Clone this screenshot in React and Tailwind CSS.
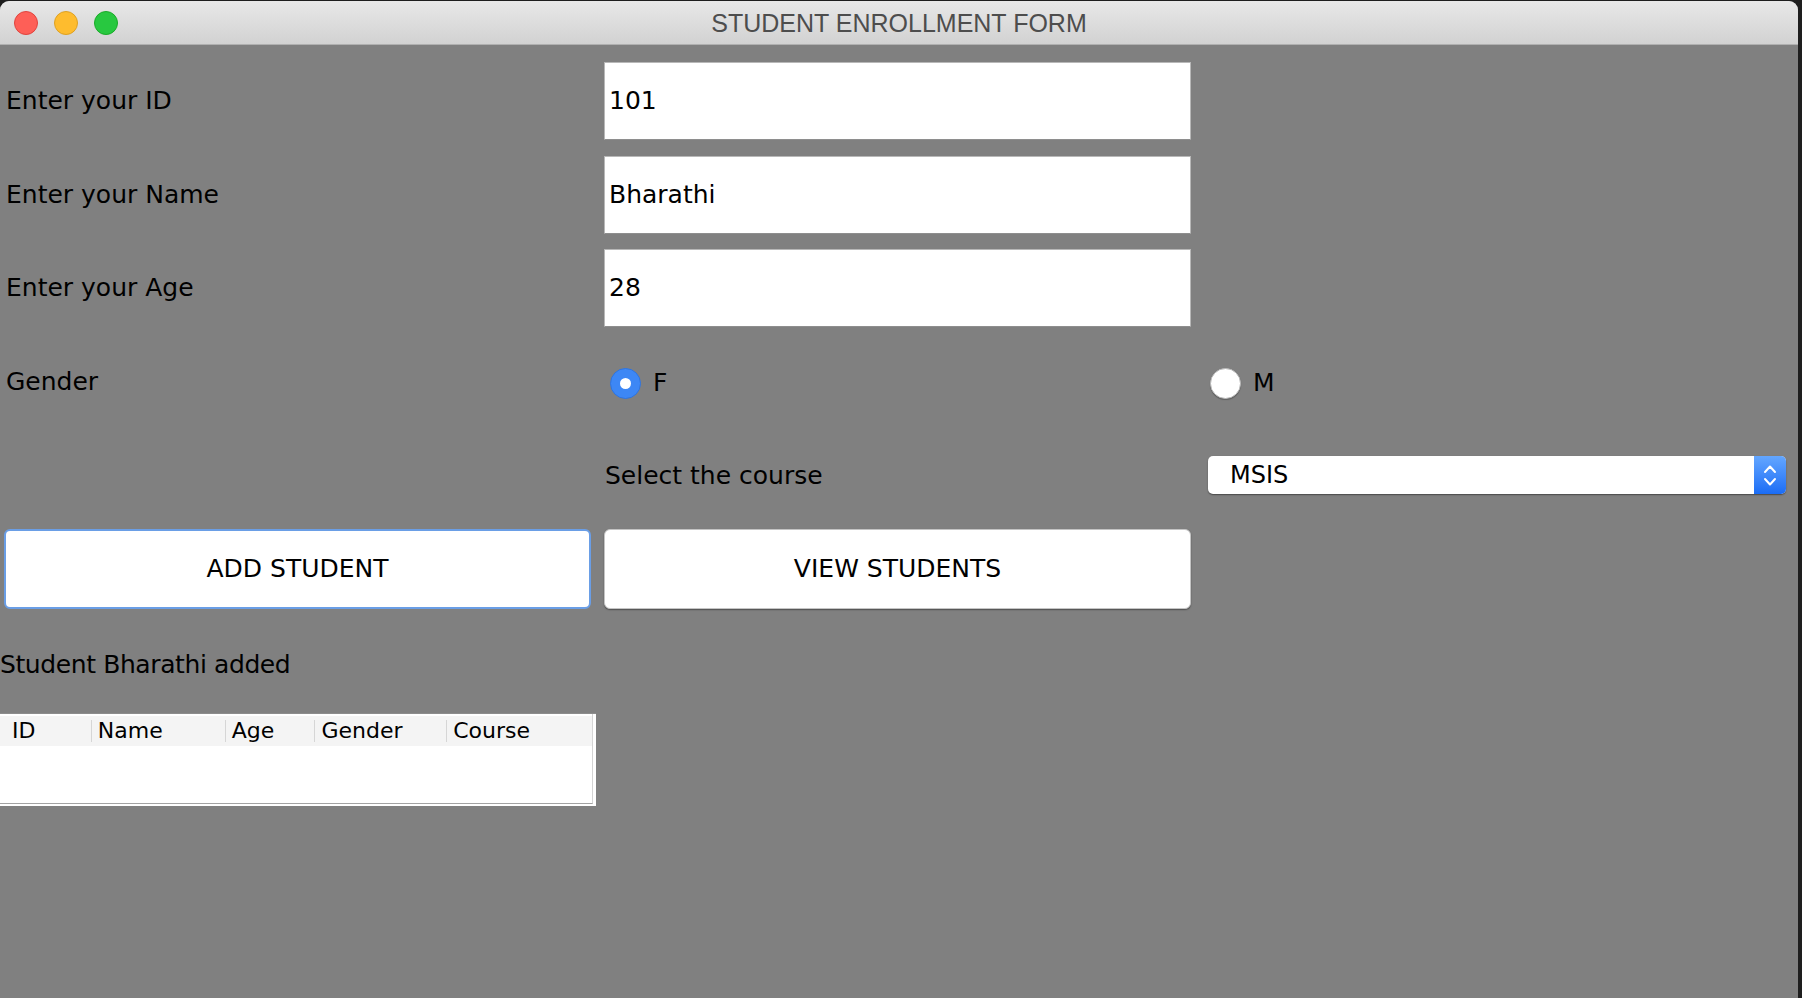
import React from "react";

const font = { fontFamily: '"DejaVu Sans", sans-serif' };

function Field({ value }) {
  return (
    <div className="my-[1px] flex items-center bg-white border border-[#b8b8b8] border-b-[#8e8e8e] pl-[4px] text-[25px] text-black">
      {value}
    </div>
  );
}

function Label({ children, className = "" }) {
  return (
    <div className={`flex items-center text-[25px] text-black ${className}`}>
      {children}
    </div>
  );
}

function Radio({ checked, label }) {
  return (
    <div className="flex items-center gap-[12px] pl-[6px] pt-[3px] text-[25px] text-black">
      {checked ? (
        <div className="w-[31px] h-[31px] rounded-full bg-[#3d87f5] border border-[#2f74de] flex items-center justify-center">
          <div className="w-[11px] h-[11px] rounded-full bg-white" />
        </div>
      ) : (
        <div className="w-[31px] h-[31px] rounded-full bg-white border border-[#b9b9b9] shadow-[0_1px_1px_rgba(0,0,0,0.25)]" />
      )}
      <span>{label}</span>
    </div>
  );
}

function Combo() {
  return (
    <div className="flex items-center pl-[4px] pr-[5px]">
      <div className="flex-1 h-[38px] flex bg-white rounded-[5px] shadow-[0_1px_1.5px_rgba(0,0,0,0.45)] overflow-hidden">
        <div className="flex-1 flex items-center pl-[22px] text-[24px] text-black">MSIS</div>
        <div className="w-[32px] h-full bg-gradient-to-b from-[#63a6ff] to-[#1a6cf5] flex flex-col items-center justify-center gap-[3px]">
          <svg width="14" height="10" viewBox="0 0 14 10">
            <path d="M2 8 L7 2.5 L12 8" fill="none" stroke="white" strokeWidth="2" strokeLinecap="round" strokeLinejoin="round" />
          </svg>
          <svg width="14" height="10" viewBox="0 0 14 10">
            <path d="M2 2 L7 7.5 L12 2" fill="none" stroke="white" strokeWidth="2" strokeLinecap="round" strokeLinejoin="round" />
          </svg>
        </div>
      </div>
    </div>
  );
}

function StudentTable() {
  const cols = [
    { name: "ID", w: "w-[91px]", pl: "pl-[12px]" },
    { name: "Name", w: "w-[134px]", pl: "pl-[7px]" },
    { name: "Age", w: "w-[90px]", pl: "pl-[7px]" },
    { name: "Gender", w: "w-[132px]", pl: "pl-[7px]" },
    { name: "Course", w: "w-[146px]", pl: "pl-[7px]" },
  ];
  return (
    <div className="-ml-[4px] -mt-[3px] w-[596px] h-[93px] bg-white border-t border-[#8c8c8c] pr-[3px] pb-[2px]">
      <div className="h-full flex flex-col border-r border-b border-[#a3a3a3] border-r-[#d4d4d4]">
        <div className="mt-[2px] h-[30px] bg-[#f4f4f4] flex">
          {cols.map((c, i) => (
            <div key={c.name} className={`${c.w} h-full flex items-center relative ${c.pl} text-[22px] text-black`}>
              {i > 0 && <div className="absolute left-0 top-[4px] bottom-[4px] w-[1px] bg-[#d6d6d6]" />}
              {c.name}
            </div>
          ))}
          <div className="flex-1 relative">
            <div className="absolute left-0 top-[4px] bottom-[4px] w-[1px] bg-[#d6d6d6]" />
          </div>
        </div>
        <div className="flex-1" />
      </div>
    </div>
  );
}

export default function App() {
  return (
    <div className="w-[1802px] h-[998px] bg-[#1e1e1e] pt-[1px] overflow-hidden" style={font}>
      <div className="w-[1798px] h-[997px] rounded-t-[9px] overflow-hidden bg-[#808080] flex flex-col">
        {/* Title bar */}
        <div className="h-[44px] shrink-0 bg-gradient-to-b from-[#e8e8e8] to-[#d2d2d2] border-b border-[#b0b0b0] flex items-center relative">
          <div className="flex items-center gap-[16px] pl-[14px]">
            <div className="w-[24px] h-[24px] rounded-full bg-[#fe5f57] border border-[#e0443e]" />
            <div className="w-[24px] h-[24px] rounded-full bg-[#febc2e] border border-[#dea123]" />
            <div className="w-[24px] h-[24px] rounded-full bg-[#28c840] border border-[#1aab29]" />
          </div>
          <div
            className="absolute inset-0 flex items-center justify-center pt-[2px] text-[25px] text-[#4d4d4d]"
            style={{ fontFamily: '"Liberation Sans", sans-serif' }}
          >
            STUDENT ENROLLMENT FORM
          </div>
        </div>

        {/* Form */}
        <div className="grid grid-cols-[587px_587px_587px] grid-rows-[repeat(7,80px)_93px] gap-x-[13px] gap-y-[13.5px] pl-[4px] pt-[16px]">
          <Label className="pl-[2px]">Enter your ID</Label>
          <Field value="101" />
          <div />

          <Label className="pl-[2px]">Enter your Name</Label>
          <Field value="Bharathi" />
          <div />

          <Label className="pl-[2px]">Enter your Age</Label>
          <Field value="28" />
          <div />

          <Label className="pl-[2px]">Gender</Label>
          <Radio checked label="F" />
          <Radio label="M" />

          <div />
          <Label className="pl-[1px] pt-[2px]">Select the course</Label>
          <Combo />

          <button className="bg-white rounded-[6px] border-[2px] border-[#6a9ee6] text-[25px] text-black">
            ADD STUDENT
          </button>
          <button className="bg-white rounded-[6px] border border-[#c4c4c4] shadow-[0_1px_1.5px_rgba(0,0,0,0.4)] text-[25px] text-black">
            VIEW STUDENTS
          </button>
          <div />

          <Label className="-ml-[4px] whitespace-nowrap tracking-[-0.4px] pt-[6px]">Student Bharathi added</Label>
          <div />
          <div />

          <StudentTable />
          <div />
          <div />
        </div>
      </div>
    </div>
  );
}
